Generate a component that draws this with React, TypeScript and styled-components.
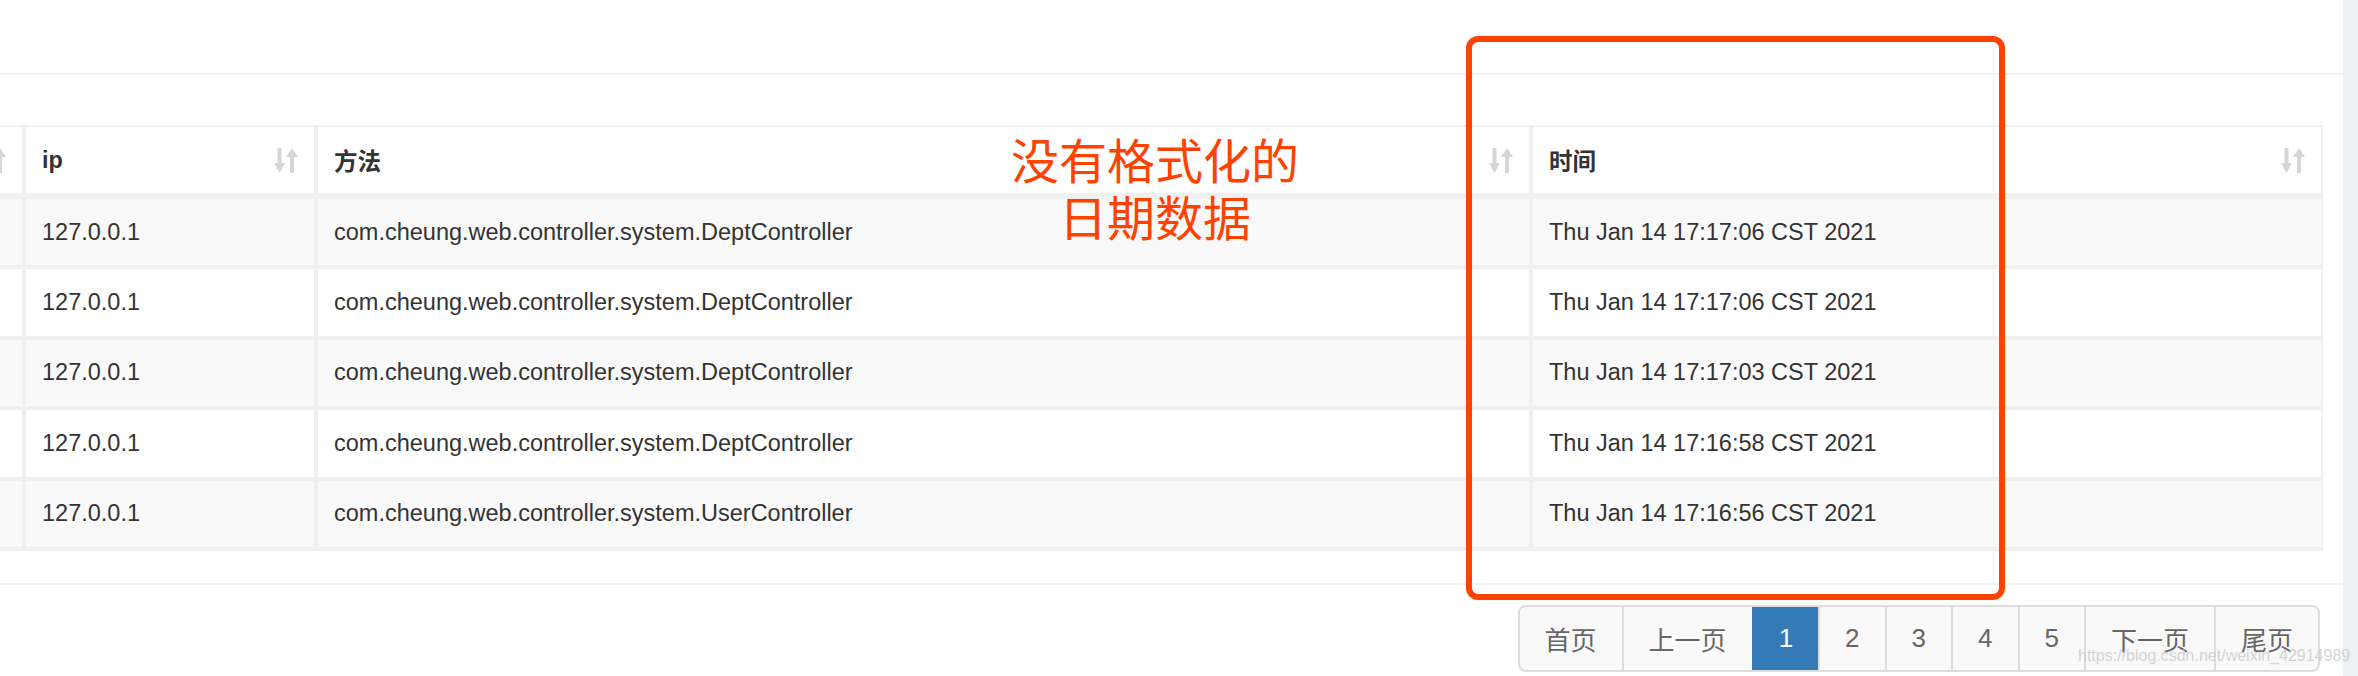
import React from "react";
import styled, { createGlobalStyle } from "styled-components";

const Global = createGlobalStyle`
  html, body { margin: 0; padding: 0; background: #fff; }
  body {
    font-family: "Liberation Sans", "Noto Sans CJK SC", sans-serif;
    color: #333;
  }
  * { box-sizing: border-box; }
`;

const Page = styled.div`
  position: relative;
  display: flex;
  width: 2358px;
  height: 676px;
  overflow: hidden;
  background: #fff;
`;

const Main = styled.div`
  flex: 1;
  min-width: 0;
  display: flex;
  flex-direction: column;
`;

const Scrollbar = styled.div`
  width: 15px;
  flex-shrink: 0;
  background: #edf0f5;
`;

const TopBar = styled.div`
  height: 75px;
  border-bottom: 2px solid #f2f2f2;
`;

const Content = styled.div`
  padding: 50px 20px 0 0;
`;

const Table = styled.div`
  display: flex;
  flex-direction: column;
  gap: 4px;
  background: #f0f0f0;
  padding: 2px 2px 4px 0;
`;

const Row = styled.div<{ $head?: boolean }>`
  display: grid;
  grid-template-columns: 22px 288px 1fr 788px;
  column-gap: 4px;
  height: ${(p) => (p.$head ? "66px" : "66.4px")};
  margin-bottom: ${(p) => (p.$head ? "2px" : "0")};
`;

const Cell = styled.div<{ $striped?: boolean; $edge?: boolean; $head?: boolean }>`
  display: flex;
  align-items: center;
  justify-content: ${(p) => (p.$edge ? "flex-end" : "space-between")};
  padding: ${(p) => (p.$edge ? "0 16px 0 0" : "0 16px")};
  overflow: hidden;
  white-space: nowrap;
  background: ${(p) => (p.$striped ? "#f9f9f9" : "#fff")};
  font-size: 23.5px;
  font-weight: ${(p) => (p.$head ? 700 : 400)};
  color: #333;
`;

const SortSvg = styled.svg`
  width: 24px;
  height: 25px;
  flex-shrink: 0;
`;

const Divider = styled.div`
  margin-top: 32px;
  height: 2px;
  background: #f3f3f3;
`;

const PagerRow = styled.div`
  display: flex;
  justify-content: flex-end;
  padding: 20px 23px 0 0;
`;

const Pager = styled.div`
  display: flex;
  height: 67px;
  border: 2px solid #ddd;
  border-radius: 8px;
  overflow: hidden;
  background: #f9f9f9;
`;

const PageItem = styled.div<{ $active?: boolean; $first?: boolean }>`
  display: flex;
  align-items: center;
  justify-content: center;
  padding: 0 25px;
  font-size: 26px;
  font-family: "Liberation Sans", "Noto Sans CJK SC", sans-serif;
  color: ${(p) => (p.$active ? "#fff" : "#666")};
  background: ${(p) => (p.$active ? "#337ab7" : "transparent")};
  border-left: ${(p) =>
    p.$first ? "none" : `2px solid ${p.$active ? "#337ab7" : "#ddd"}`};
`;

const RedBox = styled.div`
  position: absolute;
  left: 1466px;
  top: 36px;
  width: 539px;
  height: 564px;
  border: 6px solid #ff4200;
  border-radius: 12px;
  pointer-events: none;
`;

const Note = styled.div`
  position: absolute;
  left: 955px;
  top: 130px;
  width: 400px;
  text-align: center;
  font-family: "Noto Sans CJK SC", sans-serif;
  font-size: 48px;
  line-height: 57px;
  color: #ff4200;
`;

const Watermark = styled.div`
  position: absolute;
  left: 2078px;
  top: 647px;
  font-family: "Liberation Sans", sans-serif;
  font-size: 16px;
  color: rgba(200, 200, 200, 0.8);
  white-space: nowrap;
  pointer-events: none;
`;

const SortIcon = () => (
  <SortSvg viewBox="0 0 24 25">
    <rect x="3.5" y="0" width="4" height="16" fill="#d6d6d6" />
    <polygon points="0,15 11,15 5.5,25" fill="#d6d6d6" />
    <polygon points="12,9 24,9 18,0" fill="#d6d6d6" />
    <rect x="16" y="8" width="4" height="17" fill="#d6d6d6" />
  </SortSvg>
);

const rows = [
  { ip: "127.0.0.1", m: "com.cheung.web.controller.system.DeptController", t: "Thu Jan 14 17:17:06 CST 2021" },
  { ip: "127.0.0.1", m: "com.cheung.web.controller.system.DeptController", t: "Thu Jan 14 17:17:06 CST 2021" },
  { ip: "127.0.0.1", m: "com.cheung.web.controller.system.DeptController", t: "Thu Jan 14 17:17:03 CST 2021" },
  { ip: "127.0.0.1", m: "com.cheung.web.controller.system.DeptController", t: "Thu Jan 14 17:16:58 CST 2021" },
  { ip: "127.0.0.1", m: "com.cheung.web.controller.system.UserController", t: "Thu Jan 14 17:16:56 CST 2021" },
];

const pages = ["首页", "上一页", "1", "2", "3", "4", "5", "下一页", "尾页"];

export default function App() {
  return (
    <>
      <Global />
      <Page>
        <Main>
          <TopBar />
          <Content>
            <Table>
              <Row $head>
                <Cell $edge $head>
                  <SortIcon />
                </Cell>
                <Cell $head>
                  <span>ip</span>
                  <SortIcon />
                </Cell>
                <Cell $head>
                  <span>方法</span>
                  <SortIcon />
                </Cell>
                <Cell $head>
                  <span>时间</span>
                  <SortIcon />
                </Cell>
              </Row>
              {rows.map((r, i) => (
                <Row key={i}>
                  <Cell $edge $striped={i % 2 === 0} />
                  <Cell $striped={i % 2 === 0}>{r.ip}</Cell>
                  <Cell $striped={i % 2 === 0}>{r.m}</Cell>
                  <Cell $striped={i % 2 === 0}>{r.t}</Cell>
                </Row>
              ))}
            </Table>
          </Content>
          <Divider />
          <PagerRow>
            <Pager>
              {pages.map((p, i) => (
                <PageItem key={p} $first={i === 0} $active={p === "1"}>
                  {p}
                </PageItem>
              ))}
            </Pager>
          </PagerRow>
        </Main>
        <Scrollbar />
        <RedBox />
        <Note>
          没有格式化的
          <br />
          日期数据
        </Note>
        <Watermark>https://blog.csdn.net/weixin_42914989</Watermark>
      </Page>
    </>
  );
}
